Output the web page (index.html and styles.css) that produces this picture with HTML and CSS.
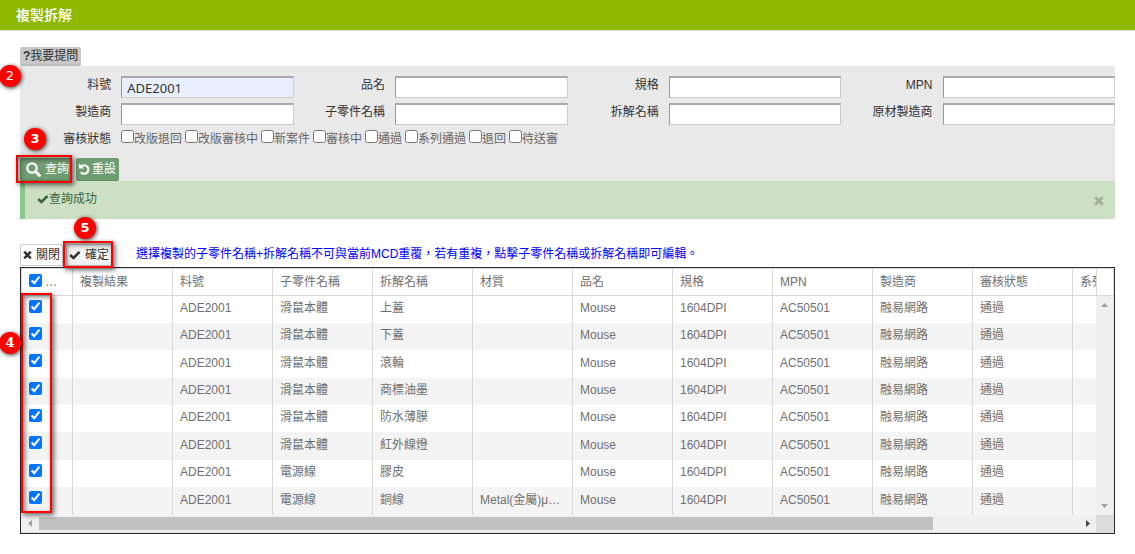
FILE: index.html
```html
<!DOCTYPE html>
<html lang="zh-Hant">
<head>
<meta charset="utf-8">
<title>複製拆解</title>
<link rel="stylesheet" href="styles.css">
</head>
<body>
<header class="titlebar"><h1>複製拆解</h1></header>
<main class="page">
  <button class="ask" type="button"><b>?</b>我要提問</button>
  <form class="search">
    <div class="fields">
      <div class="field"><label for="f1">料號</label><input id="f1" class="filled" type="text" value="ADE2001"></div>
      <div class="field"><label for="f2">品名</label><input id="f2" type="text"></div>
      <div class="field"><label for="f3">規格</label><input id="f3" type="text"></div>
      <div class="field"><label for="f4">MPN</label><input id="f4" type="text"></div>
      <div class="field"><label for="f5">製造商</label><input id="f5" type="text"></div>
      <div class="field"><label for="f6">子零件名稱</label><input id="f6" type="text"></div>
      <div class="field"><label for="f7">拆解名稱</label><input id="f7" type="text"></div>
      <div class="field"><label for="f8">原材製造商</label><input id="f8" type="text"></div>
      <div class="field states" role="group" aria-labelledby="st">
        <span id="st" class="caption">審核狀態</span>
        <div class="options">
          <label><input type="checkbox">改版退回</label>
          <label><input type="checkbox">改版審核中</label>
          <label><input type="checkbox">新案件</label>
          <label><input type="checkbox">審核中</label>
          <label><input type="checkbox">通過</label>
          <label><input type="checkbox">系列通過</label>
          <label><input type="checkbox">退回</label>
          <label><input type="checkbox">待送審</label>
        </div>
      </div>
    </div>
    <div class="actions">
      <button class="go query" type="button"><svg width="15" height="15" viewBox="0 0 15 15"><circle cx="6" cy="6" r="4.700" fill="none" stroke="currentColor" stroke-width="2.300"/><path d="M9.500 9.500L13.500 13.500" stroke="currentColor" stroke-width="2.800" stroke-linecap="round"/></svg>查詢</button>
      <button class="go" type="button"><svg width="11" height="12" viewBox="0 0 11 12"><path d="M2 3.500A4.300 4.300 0 1 1 1.800 9.300" fill="none" stroke="currentColor" stroke-width="2.100"/><path d="M0 0.500V5.500H5Z" fill="currentColor"/></svg>重設</button>
    </div>
  </form>
  <div class="notice" role="status">
    <span><svg width="12" height="10" viewBox="0 0 12 10"><path d="M1.200 5L4.500 8L10.500 1.800" fill="none" stroke="currentColor" stroke-width="2.600"/></svg>查詢成功</span>
    <button class="dismiss" type="button" aria-label="關閉訊息"><svg width="10" height="10" viewBox="0 0 10 10"><path d="M1.200 1.200L8.800 8.800M8.800 1.200L1.200 8.800" stroke="currentColor" stroke-width="2.800"/></svg></button>
  </div>
  <div class="toolbar">
    <button class="tool" type="button"><svg width="9" height="10" viewBox="0 0 9 10"><path d="M1.200 1.700L7.800 8.300M7.800 1.700L1.200 8.300" stroke="currentColor" stroke-width="2.600"/></svg>關閉</button>
    <button class="tool confirm" type="button"><svg width="12" height="10" viewBox="0 0 12 10"><path d="M1.200 5L4.500 8L10.500 1.800" fill="none" stroke="currentColor" stroke-width="2.600"/></svg>確定</button>
    <p class="hint">選擇複製的子零件名稱+拆解名稱不可與當前MCD重覆，若有重複，點擊子零件名稱或拆解名稱即可編輯。</p>
  </div>
  <section class="grid">
    <div class="view">
      <table>
        <colgroup><col class="pick"><col><col><col><col><col><col><col><col><col><col><col></colgroup>
        <thead><tr><th><input type="checkbox" checked aria-label="全選"> …</th><th>複製結果</th><th>料號</th><th>子零件名稱</th><th>拆解名稱</th><th>材質</th><th>品名</th><th>規格</th><th>MPN</th><th>製造商</th><th>審核狀態</th><th>系列</th></tr></thead>
        <tbody>
          <tr><td><input type="checkbox" checked aria-label="上蓋"></td><td></td><td>ADE2001</td><td>滑鼠本體</td><td>上蓋</td><td></td><td>Mouse</td><td>1604DPI</td><td>AC50501</td><td>融易網路</td><td>通過</td><td></td></tr>
          <tr><td><input type="checkbox" checked aria-label="下蓋"></td><td></td><td>ADE2001</td><td>滑鼠本體</td><td>下蓋</td><td></td><td>Mouse</td><td>1604DPI</td><td>AC50501</td><td>融易網路</td><td>通過</td><td></td></tr>
          <tr><td><input type="checkbox" checked aria-label="滾輪"></td><td></td><td>ADE2001</td><td>滑鼠本體</td><td>滾輪</td><td></td><td>Mouse</td><td>1604DPI</td><td>AC50501</td><td>融易網路</td><td>通過</td><td></td></tr>
          <tr><td><input type="checkbox" checked aria-label="商標油墨"></td><td></td><td>ADE2001</td><td>滑鼠本體</td><td>商標油墨</td><td></td><td>Mouse</td><td>1604DPI</td><td>AC50501</td><td>融易網路</td><td>通過</td><td></td></tr>
          <tr><td><input type="checkbox" checked aria-label="防水薄膜"></td><td></td><td>ADE2001</td><td>滑鼠本體</td><td>防水薄膜</td><td></td><td>Mouse</td><td>1604DPI</td><td>AC50501</td><td>融易網路</td><td>通過</td><td></td></tr>
          <tr><td><input type="checkbox" checked aria-label="紅外線燈"></td><td></td><td>ADE2001</td><td>滑鼠本體</td><td>紅外線燈</td><td></td><td>Mouse</td><td>1604DPI</td><td>AC50501</td><td>融易網路</td><td>通過</td><td></td></tr>
          <tr><td><input type="checkbox" checked aria-label="膠皮"></td><td></td><td>ADE2001</td><td>電源線</td><td>膠皮</td><td></td><td>Mouse</td><td>1604DPI</td><td>AC50501</td><td>融易網路</td><td>通過</td><td></td></tr>
          <tr><td><input type="checkbox" checked aria-label="銅線"></td><td></td><td>ADE2001</td><td>電源線</td><td>銅線</td><td>Metal(金屬)μ…</td><td>Mouse</td><td>1604DPI</td><td>AC50501</td><td>融易網路</td><td>通過</td><td></td></tr>
        </tbody>
      </table>
    </div>
    <div class="side">
      <div class="sidehead"></div>
      <div class="vbar"><svg width="7" height="4"><path d="M0 4L3.500 0L7 4Z"/></svg><svg width="7" height="4"><path d="M0 0L3.500 4L7 0Z"/></svg></div>
    </div>
    <div class="hbar"><svg width="4" height="7"><path d="M4 0L0 3.500L4 7Z"/></svg><div class="track"><div class="thumb"></div></div><svg class="on" width="4" height="7"><path d="M0 0L4 3.500L0 7Z"/></svg></div>
    <div class="corner"></div>
  </section>
</main>
<div class="mark mark-query"></div>
<div class="mark mark-confirm"></div>
<div class="mark mark-rows"></div>
<span class="pin pin-2">2</span>
<span class="pin pin-3">3</span>
<span class="pin pin-4">4</span>
<span class="pin pin-5">5</span>
</body>
</html>
```

FILE: styles.css
```css
* { box-sizing: border-box; }
body {
  margin: 0;
  position: relative;
  background: #fff;
  color: #333;
  font: 12px/16px "Liberation Sans", "Noto Sans CJK TC", sans-serif;
}
button, input { font: inherit; color: inherit; }
button { display: inline-flex; align-items: center; border: 0; margin: 0; padding: 0; white-space: nowrap; }
input[type="checkbox"] { width: 13px; height: 13px; margin: 0; }

.titlebar { background: #8fb800; border-bottom: 1px solid #e2e2e2; padding: 5px 16px; }
.titlebar h1 { margin: 0; color: #fff; font-size: 14px; line-height: 20px; font-weight: 500; }

.page { padding: 16px 20px 20px; display: flex; flex-direction: column; }

.ask {
  align-self: flex-start;
  height: 19px;
  padding: 0 3px;
  background: #c8c8c8;
  border-bottom: 2px solid #bcbcbc;
  border-radius: 2px;
}

.search { background: #e9e9e9; padding-top: 10px; }
.fields { display: grid; grid-template-columns: repeat(4, 1fr); row-gap: 5px; }
.field { display: flex; min-width: 0; }
.field > label, .caption { flex: 0 0 37%; padding-right: 10px; text-align: right; line-height: 18px; }
.field > input {
  flex: 1;
  min-width: 0;
  height: 22px;
  padding: 0 5px;
  border: 1px solid #ccc;
  border-top: 2px solid #aaa;
  border-left-color: #999;
  background: #fff;
  font-family: "Noto Sans", "Noto Sans CJK TC", sans-serif;
  font-size: 13px;
}
.field > .filled { background: #e8f0fe; }
.states { grid-column: 1 / -1; display: grid; grid-template-columns: subgrid; }
.states .caption { width: 37%; grid-column: 1; grid-row: 1; }
.options {
  grid-column: 1 / -1;
  grid-row: 1;
  display: flex;
  gap: 3px;
  margin-left: 101px;
  color: #666;
}
.options label { display: flex; line-height: 18px; white-space: nowrap; }
.actions { display: flex; gap: 4px; padding-top: 10px; }
.go {
  height: 23px;
  padding: 0 3px;
  gap: 2px;
  color: #fff;
  background: #6f9c70;
  border-bottom: 1px solid #5f8d60;
  border-radius: 2px;
}
.query { gap: 4px; padding: 0 3px 0 6px; }

.notice {
  display: flex;
  justify-content: space-between;
  align-items: center;
  height: 38px;
  padding: 0 11px 2px 12px;
  border-left: 5px solid #8cc68c;
  background: #cde0c4;
  color: #3d633d;
}
.notice span { display: flex; align-items: center; }
.dismiss { background: none; color: #a0af9a; padding-top: 4px; }

.toolbar { display: flex; gap: 3px; margin-top: 25px; padding-bottom: 1px; }
.tool { height: 22px; gap: 4px; padding: 0 2px; background: #fff; border: 1px solid #ccc; border-radius: 2px; }
.confirm { background: #f4f4f4; }
.hint { margin: 0 0 0 21px; line-height: 20px; color: #00f; }

.grid {
  display: grid;
  grid-template-columns: minmax(0, 1fr) 17px;
  border: 1px solid #2c2c2c;
  box-shadow: inset 0 0 0 1px #ddd;
  padding: 1px 1px 1px 0;
}
.view { overflow: hidden; }
table { width: 1152px; border-collapse: separate; border-spacing: 0; table-layout: fixed; color: #707070; }
.pick { width: 52px; }
th, td {
  padding: 0 7px 3px;
  border-right: 1px solid #d8d8d8;
  text-align: left;
  font-weight: 400;
  white-space: nowrap;
  overflow: hidden;
}
th:first-child, td:first-child { padding-left: 8px; }
th { height: 27px; padding-bottom: 0; border-bottom: 1px solid #d8d8d8; }
th input { vertical-align: -1px; }
td:first-child { padding-top: 4px; vertical-align: top; line-height: 13px; }
td input { display: block; }
tbody tr { height: 27px; }
tbody tr:nth-child(3n), tbody tr:last-child { height: 28px; }
tbody tr:nth-child(even) { background: #f4f4f4; }
.side { display: flex; flex-direction: column; }
.sidehead { height: 27px; border-bottom: 1px solid #d8d8d8; border-left: 1px solid #d8d8d8; }
.vbar {
  flex: 1;
  display: flex;
  flex-direction: column;
  justify-content: space-between;
  align-items: center;
  padding: 7px 0;
  background: #f0f0f0;
}
svg { flex: none; }
.vbar svg, .hbar svg { fill: #a0a0a0; }
.hbar .on { fill: #444; }
.hbar { display: flex; align-items: center; gap: 7px; height: 17px; padding: 0 6px 0 7px; background: #f0f0f0; }
.track { flex: 1; }
.thumb { width: 86%; height: 13px; background: #c1c1c1; }
.corner { background: #dcdcdc; }

.mark { position: absolute; border: 2px solid #f00; box-shadow: 2px 2px 5px rgba(0, 0, 0, .6), inset 2px 2px 5px rgba(0, 0, 0, .5); }
.mark-query { left: 16px; top: 155px; width: 56px; height: 28px; }
.mark-confirm { left: 63px; top: 241px; width: 50px; height: 27px; }
.mark-rows { left: 21px; top: 293px; width: 31px; height: 220px; }
.pin {
  position: absolute;
  width: 22px;
  height: 22px;
  border-radius: 50%;
  background: #f00;
  color: #fff;
  text-align: center;
  font: 13px/22px "DejaVu Sans", sans-serif;
  box-shadow: 1px 1px 4px rgba(0, 0, 0, .8);
}
.pin-2 { left: -1px; top: 65px; }
.pin-3 { left: 24px; top: 128px; font-weight: 700; }
.pin-4 { left: -1px; top: 332px; font-family: "DejaVu Serif", serif; font-weight: 700; }
.pin-5 { left: 74px; top: 217px; font-weight: 700; }
```
